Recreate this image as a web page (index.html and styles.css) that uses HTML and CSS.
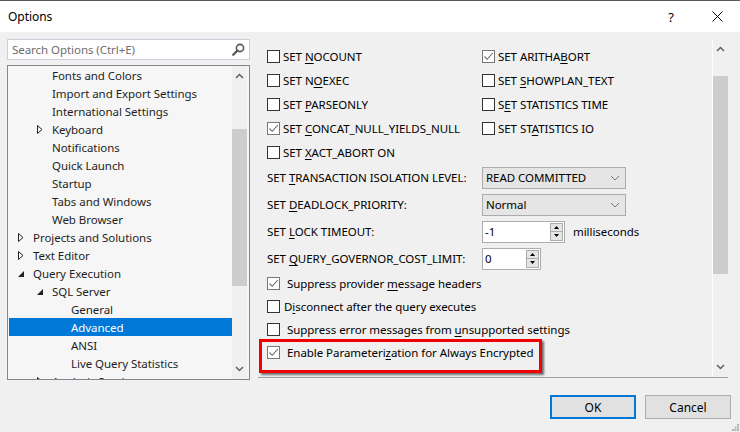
FILE: index.html
```html
<!DOCTYPE html>
<html>
<head>
<meta charset="utf-8">
<link rel="stylesheet" href="styles.css">
</head>
<body>
<div class="window">
  <div class="titlebar">
    <span class="title">Options</span>
    <span class="help">?</span>
    <span class="close"><svg width="11" height="11" viewBox="0 0 11 11"><path d="M0.5 0.5L10.5 10.5M10.5 0.5L0.5 10.5" stroke="#000" stroke-width="1" fill="none"/></svg></span>
  </div>
  <div class="main">
    <div class="left">
      <div class="search">
        <span class="search-text">Search Options (Ctrl+E)</span>
        <svg class="search-icon" width="13" height="13" viewBox="0 0 13 13"><circle cx="8" cy="5" r="3.6" stroke="#555" stroke-width="1.6" fill="none"/><path d="M5.4 7.6L1.2 11.8" stroke="#555" stroke-width="2.2" stroke-linecap="round"/></svg>
      </div>
      <div class="tree">
        <div class="tree-items">
          <div class="row l1"><span class="exp"></span><span>Fonts and Colors</span></div>
          <div class="row l1"><span class="exp"></span><span>Import and Export Settings</span></div>
          <div class="row l1"><span class="exp"></span><span>International Settings</span></div>
          <div class="row l1"><span class="exp"><svg class="tri-c" width="6" height="9" viewBox="0 0 6 9"><path d="M0.5 0.5L5 4.5L0.5 8.5Z" fill="none" stroke="#222" stroke-width="1"/></svg></span><span>Keyboard</span></div>
          <div class="row l1"><span class="exp"></span><span>Notifications</span></div>
          <div class="row l1"><span class="exp"></span><span>Quick Launch</span></div>
          <div class="row l1"><span class="exp"></span><span>Startup</span></div>
          <div class="row l1"><span class="exp"></span><span>Tabs and Windows</span></div>
          <div class="row l1"><span class="exp"></span><span>Web Browser</span></div>
          <div class="row l0"><span class="exp"><svg class="tri-c" width="6" height="9" viewBox="0 0 6 9"><path d="M0.5 0.5L5 4.5L0.5 8.5Z" fill="none" stroke="#222" stroke-width="1"/></svg></span><span>Projects and Solutions</span></div>
          <div class="row l0"><span class="exp"><svg class="tri-c" width="6" height="9" viewBox="0 0 6 9"><path d="M0.5 0.5L5 4.5L0.5 8.5Z" fill="none" stroke="#222" stroke-width="1"/></svg></span><span>Text Editor</span></div>
          <div class="row l0"><span class="exp"><svg class="tri-e" width="6" height="6" viewBox="0 0 6 6"><path d="M6 0L6 6L0 6Z" fill="#222"/></svg></span><span>Query Execution</span></div>
          <div class="row l1"><span class="exp"><svg class="tri-e" width="6" height="6" viewBox="0 0 6 6"><path d="M6 0L6 6L0 6Z" fill="#222"/></svg></span><span>SQL Server</span></div>
          <div class="row l2"><span class="exp"></span><span>General</span></div>
          <div class="row l2 selected"><span class="exp"></span><span>Advanced</span></div>
          <div class="row l2"><span class="exp"></span><span>ANSI</span></div>
          <div class="row l2"><span class="exp"></span><span>Live Query Statistics</span></div>
          <div class="row l1"><span class="exp"><svg class="tri-c" width="6" height="9" viewBox="0 0 6 9"><path d="M0.5 0.5L5 4.5L0.5 8.5Z" fill="none" stroke="#222" stroke-width="1"/></svg></span><span>Analysis Services</span></div>
        </div>
        <div class="vscroll tree-scroll">
          <svg class="arrow up" width="9" height="6" viewBox="0 0 9 6"><path d="M1 5L4.5 1.5L8 5" stroke="#606060" stroke-width="1.5" fill="none"/></svg>
          <div class="track"><div class="thumb tree-thumb"></div></div>
          <svg class="arrow down" width="9" height="6" viewBox="0 0 9 6"><path d="M1 1L4.5 4.5L8 1" stroke="#606060" stroke-width="1.5" fill="none"/></svg>
        </div>
      </div>
    </div>
    <div class="right">
      <div class="scroller">
        <div class="content">
          <div class="checks">
            <div class="col col-a">
              <div class="cb"><span class="box"></span><span>SET <u>N</u>OCOUNT</span></div>
              <div class="cb"><span class="box"></span><span>SET N<u>O</u>EXEC</span></div>
              <div class="cb"><span class="box"></span><span>SET <u>P</u>ARSEONLY</span></div>
              <div class="cb"><span class="box checked"><svg width="11" height="11" viewBox="0 0 11 11"><path d="M1.5 5.5L4.2 8.3L9.8 2" stroke="#666" stroke-width="1.1" fill="none"/></svg></span><span>SET <u>C</u>ONCAT_NULL_YIELDS_NULL</span></div>
              <div class="cb"><span class="box"></span><span>SET <u>X</u>ACT_ABORT ON</span></div>
            </div>
            <div class="col col-b">
              <div class="cb"><span class="box checked"><svg width="11" height="11" viewBox="0 0 11 11"><path d="M1.5 5.5L4.2 8.3L9.8 2" stroke="#666" stroke-width="1.1" fill="none"/></svg></span><span>SET ARITHA<u>B</u>ORT</span></div>
              <div class="cb"><span class="box"></span><span>SET <u>S</u>HOWPLAN_TEXT</span></div>
              <div class="cb"><span class="box"></span><span>S<u>E</u>T STATISTICS TIME</span></div>
              <div class="cb"><span class="box"></span><span>SET ST<u>A</u>TISTICS IO</span></div>
            </div>
          </div>
          <div class="setting">
            <span class="label">SET <u>T</u>RANSACTION ISOLATION LEVEL:</span>
            <div class="select"><span>READ COMMITTED</span><svg width="10" height="6" viewBox="0 0 10 6"><path d="M1 1L5 5L9 1" stroke="#777" stroke-width="1" fill="none"/></svg></div>
          </div>
          <div class="setting">
            <span class="label">SET <u>D</u>EADLOCK_PRIORITY:</span>
            <div class="select"><span>Normal</span><svg width="10" height="6" viewBox="0 0 10 6"><path d="M1 1L5 5L9 1" stroke="#777" stroke-width="1" fill="none"/></svg></div>
          </div>
          <div class="setting">
            <span class="label">SET <u>L</u>OCK TIMEOUT:</span>
            <div class="spin spin-wide"><span class="spin-val">-1</span><span class="spin-btns"><span class="sb"><svg width="5" height="3" viewBox="0 0 5 3"><path d="M0 3L2.5 0L5 3Z" fill="#000"/></svg></span><span class="sb"><svg width="5" height="3" viewBox="0 0 5 3"><path d="M0 0L2.5 3L5 0Z" fill="#000"/></svg></span></span></div>
            <span class="unit">milliseconds</span>
          </div>
          <div class="setting">
            <span class="label">SET <u>Q</u>UERY_GOVERNOR_COST_LIMIT:</span>
            <div class="spin spin-narrow"><span class="spin-val">0</span><span class="spin-btns"><span class="sb"><svg width="5" height="3" viewBox="0 0 5 3"><path d="M0 3L2.5 0L5 3Z" fill="#000"/></svg></span><span class="sb"><svg width="5" height="3" viewBox="0 0 5 3"><path d="M0 0L2.5 3L5 0Z" fill="#000"/></svg></span></span></div>
          </div>
          <div class="cb cb2"><span class="box checked"><svg width="11" height="11" viewBox="0 0 11 11"><path d="M1.5 5.5L4.2 8.3L9.8 2" stroke="#666" stroke-width="1.1" fill="none"/></svg></span><span class="t">Suppress provider <u>m</u>essage headers</span></div>
          <div class="cb cb2"><span class="box"></span><span class="t tight">D<u>i</u>sconnect after the query executes</span></div>
          <div class="cb cb2"><span class="box"></span><span class="t">Suppress error messages from <u>u</u>nsupported settings</span></div>
          <div class="cb cb2 highlight"><span class="box checked"><svg width="11" height="11" viewBox="0 0 11 11"><path d="M1.5 5.5L4.2 8.3L9.8 2" stroke="#666" stroke-width="1.1" fill="none"/></svg></span><span class="t">Enable Parameteri<u>z</u>ation for Always Encrypted</span></div>
        </div>
        <div class="vscroll panel-scroll">
          <svg class="arrow up" width="9" height="6" viewBox="0 0 9 6"><path d="M1 5L4.5 1.5L8 5" stroke="#606060" stroke-width="1.5" fill="none"/></svg>
          <div class="track"><div class="thumb panel-thumb"></div></div>
          <svg class="arrow down" width="9" height="6" viewBox="0 0 9 6"><path d="M1 1L4.5 4.5L8 1" stroke="#606060" stroke-width="1.5" fill="none"/></svg>
        </div>
      </div>
      <div class="footer">
        <button class="btn ok">OK</button>
        <button class="btn">Cancel</button>
      </div>
    </div>
  </div>
  <div class="grip">
    <svg width="7" height="7" viewBox="0 0 7 7"><g fill="#b4b4b4"><rect x="5" y="0" width="2" height="2"/><rect x="2.5" y="2.5" width="2" height="2"/><rect x="5" y="2.5" width="2" height="2"/><rect x="0" y="5" width="2" height="2"/><rect x="2.5" y="5" width="2" height="2"/><rect x="5" y="5" width="2" height="2"/></g></svg>
  </div>
</div>
</body>
</html>
```
FILE: styles.css
```css
* { box-sizing: border-box; }
html, body { margin: 0; padding: 0; }
body {
  width: 740px;
  height: 432px;
  overflow: hidden;
  background: #f0f0f0;
  font-family: "Noto Sans", "Segoe UI", sans-serif;
  font-size: 11.5px;
  letter-spacing: -0.05px;
  color: #000;
}
.window { position: relative; width: 740px; height: 432px; }
.titlebar {
  height: 32px;
  background: #fff;
  border-top: 1px solid #5a5a5a;
  display: flex;
  align-items: center;
  padding-left: 8px;
  font-size: 12px;
}
.title { flex: 1; }
.help { width: 12px; text-align: center; margin-right: 35px; font-size: 13px; }
.close { width: 11px; height: 11px; margin-right: 17px; display: flex; }

.main { display: flex; padding: 7px 0 0 7px; }
.left { width: 243px; display: flex; flex-direction: column; gap: 5px; }
.search {
  height: 21px;
  background: #fff;
  border: 1px solid #cccedb;
  display: flex;
  align-items: center;
  padding-left: 4px;
  padding-right: 4px;
}
.search-text { flex: 1; color: #6d6d6d; }
.search-icon { display: block; }

.tree {
  height: 315px;
  border: 1px solid #828790;
  background: #f6f6f6;
  display: flex;
  overflow: hidden;
}
.tree-items { flex: 1; overflow: hidden; }
.row {
  height: 18px;
  display: flex;
  align-items: center;
  white-space: nowrap;
  color: #1e1e1e;
}
.row.l0 { padding-left: 0; }
.row.l1 { padding-left: 19px; }
.row.l2 { padding-left: 38px; }
.row.selected { background: #0078d7; color: #fff; margin-left: 1px; padding-left: 37px; }
.exp { width: 25px; height: 18px; display: flex; align-items: center; padding-left: 10px; flex: none; }
.tri-c { display: block; }
.tri-e { display: block; margin-top: 2px; }

.vscroll { display: flex; flex-direction: column; align-items: center; flex: none; }
.tree-scroll { width: 15px; margin-right: 2px; background: #f0f0f0; }
.arrow { display: block; flex: none; }
.arrow.up { margin-top: 7px; margin-bottom: 7px; }
.arrow.down { margin-top: 6px; margin-bottom: 7px; }
.track { flex: 1; width: 100%; }
.thumb { background: #cdcdcd; width: 100%; }
.tree-thumb { margin-top: 43px; height: 157px; }

.right { margin-left: 8px; width: 470px; display: flex; flex-direction: column; }
.scroller {
  height: 339px;
  border-bottom: 1px solid #a0a0a0;
  display: flex;
}
.content { flex: 1; padding: 5px 0 0 9px; }
.panel-scroll { width: 16px; border-left: 1px solid #fff; }
.panel-thumb { margin-top: 17px; height: 198px; }

.checks { display: flex; }
.col { display: flex; flex-direction: column; }
.col-a { width: 215px; }
.cb { height: 24px; display: flex; align-items: center; white-space: nowrap; }
.box {
  width: 13px;
  height: 13px;
  border: 1px solid #333;
  background: #fff;
  flex: none;
  margin-right: 3px;
  display: flex;
  align-items: center;
  justify-content: center;
}
.box.checked { border-color: #777; }
.box svg { display: block; }
u { text-decoration: underline; text-underline-offset: 2px; }

.setting { height: 27px; display: flex; align-items: center; }
.label { width: 215px; white-space: nowrap; }
.select {
  width: 144px;
  height: 22px;
  background: #e5e5e5;
  border: 1px solid #acacac;
  display: flex;
  align-items: center;
  padding: 0 5px 0 3px;
}
.select span { flex: 1; }
.select svg { display: block; }
.spin {
  height: 22px;
  background: #fff;
  border: 1px solid #adadad;
  display: flex;
  align-items: center;
  padding: 0 1px 0 2px;
}
.spin-wide { width: 83px; }
.spin-narrow { width: 59px; }
.spin-val { flex: 1; }
.spin-btns { display: flex; flex-direction: column; }
.sb {
  width: 13px;
  height: 9px;
  background: #e5e5e5;
  border: 1px solid #adadad;
  display: flex;
  align-items: center;
  justify-content: center;
}
.sb + .sb { border-top: none; height: 9px; }
.sb svg { display: block; }
.unit { margin-left: 8px; }

.cb2 { height: 23px; }
.cb2 .t { margin-left: 4px; }
.cb2 .t.tight { margin-left: 1px; }
.highlight { position: relative; }
.highlight::after {
  content: "";
  position: absolute;
  left: -8px;
  top: -2px;
  width: 277px;
  height: 28px;
  border: 3px solid #f00000;
  box-shadow: 2px 2px 2px rgba(0,0,0,0.55);
}

.footer { display: flex; justify-content: flex-end; gap: 9px; padding: 17px 0 0 0; margin-right: -3px; }
.btn {
  width: 86px;
  height: 24px;
  background: #e1e1e1;
  border: 1px solid #adadad;
  font-family: "Noto Sans", sans-serif;
  font-size: 12px;
  color: #000;
  padding: 0;
}
.btn.ok { border: 2px solid #0078d7; }
.grip { position: absolute; right: 1px; bottom: 1px; width: 7px; height: 7px; }
.grip svg { display: block; }
```
